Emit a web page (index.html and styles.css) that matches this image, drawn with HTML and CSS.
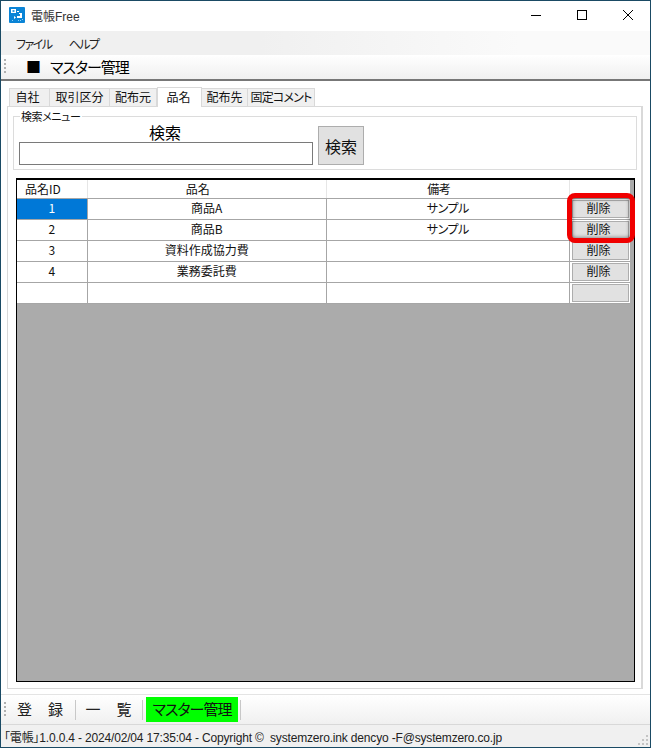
FILE: index.html
```html
<!DOCTYPE html>
<html lang="ja">
<head>
    <meta charset="UTF-8">
    <meta name="viewport" content="width=device-width, initial-scale=1.0">
    <title>電帳Free</title>
    <link rel="stylesheet" href="styles.css">
</head>
<body>
<div class="window">

    <div class="titlebar">
        <svg class="app-icon" width="16" height="16" viewBox="0 0 16 16">
            <rect width="16" height="16" rx="1" fill="#0a84d6"/>
            <path d="M2 2h5v4H2z" fill="#fff"/>
            <path d="M3.5 3.2h2v1.6h-2z" fill="#0a84d6"/>
            <path d="M8 4h2v1H8zM10 6h3v5H8V9h3V7h-1z" fill="#fff"/>
            <path d="M5 9l2 1.5L5 12z" fill="#fff"/>
            <path d="M3 13h1v1H3zM9 13h1v1H9zM11 13h1v1h-1zM13 12h1v1h-1z" fill="#8fd0f5"/>
        </svg>
        <span class="app-name">電帳Free</span>
        <div class="win-controls">
            <svg width="46" height="28" viewBox="0 1 46 28"><path d="M18 15.5h10" stroke="#000" fill="none"/></svg>
            <svg width="46" height="28" viewBox="0 1 46 28"><rect x="18.5" y="10.5" width="9" height="9" stroke="#000" fill="none"/></svg>
            <svg width="46" height="28" viewBox="0 1 46 28"><path d="M18 10l10 10M28 10L18 20" stroke="#000" fill="none"/></svg>
        </div>
    </div>

    <div class="menubar">
        <a>ファイル</a>
        <a>ヘルプ</a>
    </div>

    <div class="toolbar-top">
        <div class="grip"></div>
        <span class="page-title"><span class="page-mark">■</span>マスター管理</span>
    </div>

    <div class="content">
        <div class="tabs">
            <div class="tab tab-w41">自社</div>
            <div class="tab tab-w60">取引区分</div>
            <div class="tab tab-w47">配布元</div>
            <div class="tab tab-active">品名</div>
            <div class="tab tab-w46">配布先</div>
            <div class="tab tab-w67">固定コメント</div>
        </div>

        <div class="tab-panel">
            <fieldset class="search-group">
                <legend>検索メニュー</legend>
                <div class="search-field">
                    <label for="keyword">検索</label>
                    <input id="keyword" type="text">
                </div>
                <button class="search-button">検索</button>
            </fieldset>

            <div class="grid">
                <div class="row row-head">
                    <div class="cell col-id">品名ID</div>
                    <div class="cell col-name">品名</div>
                    <div class="cell col-note">備考</div>
                    <div class="cell col-del"></div>
                </div>
                <div class="row">
                    <div class="cell col-id selected">1</div>
                    <div class="cell col-name">商品A</div>
                    <div class="cell col-note">サンプル</div>
                    <div class="cell col-del"><button>削除</button></div>
                </div>
                <div class="row">
                    <div class="cell col-id">2</div>
                    <div class="cell col-name">商品B</div>
                    <div class="cell col-note">サンプル</div>
                    <div class="cell col-del"><button>削除</button></div>
                </div>
                <div class="row">
                    <div class="cell col-id">3</div>
                    <div class="cell col-name">資料作成協力費</div>
                    <div class="cell col-note"></div>
                    <div class="cell col-del"><button>削除</button></div>
                </div>
                <div class="row">
                    <div class="cell col-id">4</div>
                    <div class="cell col-name">業務委託費</div>
                    <div class="cell col-note"></div>
                    <div class="cell col-del"><button>削除</button></div>
                </div>
                <div class="row">
                    <div class="cell col-id"></div>
                    <div class="cell col-name"></div>
                    <div class="cell col-note"></div>
                    <div class="cell col-del"><button></button></div>
                </div>
                <div class="highlight"></div>
            </div>
        </div>
    </div>

    <div class="toolbar-bottom">
        <div class="grip"></div>
        <a class="tool tool-first">登　録</a>
        <a class="tool tool-second">一　覧</a>
        <a class="tool tool-current">マスター管理</a>
    </div>

    <div class="statusbar">
        <span>「電帳」1.0.0.4 - 2024/02/04 17:35:04 - Copyright ©&nbsp; systemzero.ink dencyo -F@systemzero.co.jp</span>
        <svg class="resize" width="12" height="12" viewBox="0 0 12 12">
            <path d="M9 2h2v2H9zM5 6h2v2H5zM9 6h2v2H9zM1 10h2v2H1zM5 10h2v2H5zM9 10h2v2H9z" fill="#c4c4c4"/>
        </svg>
    </div>

</div>
</body>
</html>
```

FILE: styles.css
```css
* {
    box-sizing: border-box;
}

body {
    margin: 0;
    background-color: #ffffff;
    font-family: "Noto Sans CJK JP", "Noto Sans", sans-serif;
    font-feature-settings: "palt";
    color: #000000;
}

.window {
    width: 651px;
    height: 748px;
    border: 1px solid #1a4a64;
    display: flex;
    flex-direction: column;
    background-color: #ffffff;
}

.titlebar {
    height: 30px;
    display: flex;
    align-items: center;
    padding: 0 0 2px 8px;
    flex: none;
}

.app-name {
    margin-left: 6px;
    font-size: 12px;
    font-family: "Liberation Sans", "Noto Sans CJK JP", sans-serif;
    color: #333333;
}

.win-controls {
    margin-left: auto;
    display: flex;
    margin-right: -1px;
}

.menubar {
    height: 24px;
    flex: none;
    display: flex;
    align-items: center;
    gap: 17px;
    padding-left: 15px;
    font-size: 12px;
    letter-spacing: -1.5px;
    color: #222222;
    background: linear-gradient(to right, #f0f0f0, #f0f0f0 40%, #fafafa 80%);
}

.toolbar-top {
    height: 26px;
    flex: none;
    display: flex;
    align-items: center;
    background: linear-gradient(to bottom, #ffffff, #f0f0f0);
    border-bottom: 2px solid #777777;
    padding-left: 3px;
}

.grip {
    width: 3px;
    height: 16px;
    flex: none;
    background-image: linear-gradient(to bottom, #b0b0b0 2px, transparent 2px);
    background-size: 2px 4px;
    background-repeat: repeat-y;
}

.page-title {
    margin-left: 19px;
    font-size: 15px;
    line-height: 20px;
    letter-spacing: -1px;
}

.page-mark {
    margin-right: 10px;
}

.content {
    flex: 1;
    min-height: 0;
    padding: 5px 7px 5px 6px;
    border-bottom: 1px solid #e4e4e4;
    display: flex;
    flex-direction: column;
}

.tabs {
    display: flex;
    height: 20px;
    padding-left: 2px;
    flex: none;
    align-items: flex-end;
}

.tab {
    height: 18px;
    background-color: #f0f0f0;
    border: 1px solid #d9d9d9;
    border-bottom: none;
    border-left-width: 0;
    font-size: 12px;
    line-height: 16px;
    text-align: center;
    white-space: nowrap;
    color: #111111;
}

.tab-w41 {
    width: 41px;
    padding-right: 4px;
    border-left-width: 1px;
}

.tab-w60 {
    width: 60px;
}

.tab-w47 {
    width: 47px;
}

.tab-w46 {
    width: 46px;
}

.tab-w67 {
    width: 67px;
    letter-spacing: -0.8px;
}

.tab-active {
    width: 45px;
    height: 20px;
    padding-right: 2px;
    background-color: #ffffff;
    border-left-width: 1px;
    position: relative;
    top: 1px;
    line-height: 17px;
}

.tab-panel {
    flex: 1;
    min-height: 0;
    border: 1px solid #d9d9d9;
    border-right-width: 2px;
    padding: 2px 4px 6px 5px;
    display: flex;
    flex-direction: column;
}

.search-group {
    margin: 0;
    height: 61px;
    flex: none;
    border: 1px solid #dcdcdc;
    padding: 0 0 0 5px;
    display: flex;
    align-items: flex-end;
    gap: 5px;
    min-width: 0;
}

.search-group legend {
    font-size: 11px;
    line-height: 14px;
    padding: 0 1px;
    margin-left: 1px;
    letter-spacing: -0.4px;
    color: #111111;
}

.search-field {
    width: 294px;
    margin-bottom: 3px;
    display: flex;
    flex-direction: column;
    align-items: center;
}

.search-field label {
    font-size: 16px;
    line-height: 18px;
    height: 19px;
    margin-left: -2px;
}

.search-field input {
    width: 100%;
    height: 23px;
    border: 1px solid #7a7a7a;
    background-color: #ffffff;
    padding: 0;
}

.search-button {
    width: 46px;
    height: 39px;
    margin-bottom: 3px;
    background-color: #e1e1e1;
    border: 1px solid #adadad;
    font-family: inherit;
    font-size: 16px;
    padding: 0;
    color: #111111;
}

.grid {
    flex: 1;
    min-height: 0;
    margin: 8px 2px 0 3px;
    background-color: #ababab;
    border: 1px solid #000000;
    border-top-width: 2px;
    position: relative;
}

.row {
    display: flex;
    height: 21px;
    margin-right: 4px;
    background-color: #ffffff;
    border-bottom: 1px solid #a6a6a6;
}

.row-head {
    height: 19px;
}

.cell {
    font-size: 12px;
    line-height: 18px;
    text-align: center;
    border-right: 1px solid #a6a6a6;
    overflow: hidden;
    white-space: nowrap;
    color: #111111;
}

.row-head .cell {
    line-height: 17px;
    padding-right: 18px;
    border-right-color: #e6e6e6;
}

.col-id {
    width: 71px;
}

.col-name {
    width: 239px;
}

.col-note {
    width: 244px;
    letter-spacing: -0.5px;
}

.row .col-del {
    width: 60px;
    border-right: none;
    padding: 1px 0 1px 2px;
}

.col-del button {
    display: block;
    width: 57px;
    height: 18px;
    padding: 0 4px 2px 0;
    background-color: #e1e1e1;
    border: 1px solid #adadad;
    font-family: inherit;
    font-size: 12px;
    line-height: 14px;
    color: #111111;
}

.selected {
    background-color: #0078d7;
    color: #ffffff;
}

/* red marker over the first two delete buttons */
.highlight {
    position: absolute;
    left: 550px;
    top: 13px;
    width: 68px;
    height: 50px;
    border: 5px solid #f00000;
    border-radius: 8px;
    box-shadow: inset 0 0 4px rgba(0, 0, 0, 0.55);
}

.toolbar-bottom {
    height: 30px;
    flex: none;
    display: flex;
    align-items: center;
    padding-left: 3px;
    background: linear-gradient(to bottom, #ffffff, #f0f0f0);
    border-bottom: 1px solid #d8d8d8;
}

.tool {
    height: 25px;
    font-size: 15px;
    line-height: 24px;
    letter-spacing: 0.5px;
    color: #222222;
    white-space: nowrap;
    position: relative;
    margin-right: 5px;
}

.tool::after {
    content: "";
    position: absolute;
    right: -3px;
    top: 3px;
    bottom: 2px;
    width: 1px;
    background-color: #c8c8c8;
}

.tool-first {
    margin-left: 7px;
    padding: 0 9px 0 3px;
}

.tool-second {
    padding: 0 8px;
}

.tool-current {
    width: 92px;
    margin-left: 1px;
    background-color: #00ff00;
    color: #111111;
    text-align: center;
    letter-spacing: -1px;
}

.statusbar {
    height: 22px;
    flex: none;
    display: flex;
    align-items: center;
    font-family: "Liberation Sans", "Noto Sans CJK JP", sans-serif;
    font-size: 12px;
    letter-spacing: -0.17px;
    padding-left: 3px;
    background-color: #f0f0f0;
    color: #222222;
    white-space: nowrap;
}

.resize {
    margin-left: auto;
    margin-top: 6px;
    margin-right: 1px;
}
```
